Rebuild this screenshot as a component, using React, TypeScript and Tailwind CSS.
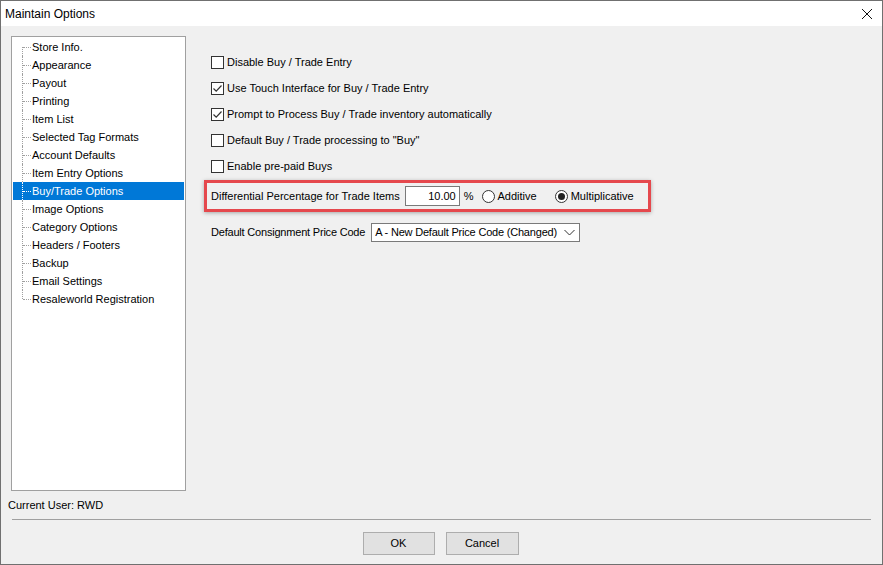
import { useState } from 'react'

const sections = [
  'Store Info.',
  'Appearance',
  'Payout',
  'Printing',
  'Item List',
  'Selected Tag Formats',
  'Account Defaults',
  'Item Entry Options',
  'Buy/Trade Options',
  'Image Options',
  'Category Options',
  'Headers / Footers',
  'Backup',
  'Email Settings',
  'Resaleworld Registration',
]

const checkOptions = [
  { label: 'Disable Buy / Trade Entry', checked: false },
  { label: 'Use Touch Interface for Buy / Trade Entry', checked: true },
  { label: 'Prompt to Process Buy / Trade inventory automatically', checked: true },
  { label: 'Default Buy / Trade processing to "Buy"', checked: false },
  { label: 'Enable pre-paid Buys', checked: false },
]

function CheckBox({ checked }: { checked: boolean }) {
  return (
    <span className="w-[13px] h-[13px] border border-[#333] bg-white flex items-center justify-center shrink-0">
      {checked && (
        <svg width="11" height="11" viewBox="0 0 11 11">
          <path d="M1.5 5.5 L4.2 8.2 L9.5 2.5" fill="none" stroke="#333" strokeWidth="1.2" />
        </svg>
      )}
    </span>
  )
}

function Radio({ checked }: { checked: boolean }) {
  return (
    <span className="w-[13px] h-[13px] rounded-full border border-[#333] bg-white flex items-center justify-center shrink-0">
      {checked && <span className="w-[7px] h-[7px] rounded-full bg-[#222]" />}
    </span>
  )
}

function TreeRow({ label, index, count, selected }: { label: string; index: number; count: number; selected: boolean }) {
  const first = index === 0
  const last = index === count - 1
  return (
    <div className={`relative h-[18px] flex items-center pl-[19px] ${selected ? 'bg-[#0078d7] text-white' : 'text-black'}`}>
      {/* tree connector lines */}
      <span
        className={`absolute left-[9px] w-0 border-l border-dotted ${selected ? 'border-white' : 'border-[#a0a0a0]'} ${first ? 'top-[9px] bottom-0' : last ? 'top-0 h-[9px]' : 'top-0 bottom-0'}`}
      />
      <span className={`absolute left-[10px] top-[9px] w-[8px] h-0 border-t border-dotted ${selected ? 'border-white' : 'border-[#a0a0a0]'}`} />
      <span className="leading-none">{label}</span>
    </div>
  )
}

export default function App() {
  const [selected] = useState('Buy/Trade Options')

  return (
    <div
      className="w-[883px] h-[565px] bg-[#f0f0f0] border border-[#707070] flex flex-col text-[11px] text-black overflow-hidden"
      style={{ fontFamily: '"Liberation Sans", Arial, sans-serif' }}
    >
      {/* title bar */}
      <div className="h-[25px] bg-white flex items-center justify-between pl-[4px] pr-[9px] shrink-0">
        <span className="text-[12px]">Maintain Options</span>
        <svg width="12" height="12" viewBox="0 0 12 12">
          <path d="M1 1 L11 11 M11 1 L1 11" stroke="#111" strokeWidth="1" />
        </svg>
      </div>

      <div className="flex-1 flex flex-col">
        <div className="flex pt-[10px] pl-[10px]">
          {/* section tree */}
          <div className="w-[175px] h-[455px] bg-white border border-[#a0a0a0] pt-[1px] px-px shrink-0">
            {sections.map((s, i) => (
              <TreeRow key={s} label={s} index={i} count={sections.length} selected={s === selected} />
            ))}
          </div>

          {/* buy/trade settings */}
          <div className="pl-[25px] pt-[13px] flex flex-col">
            {checkOptions.map((o) => (
              <div key={o.label} className="h-[26px] flex items-center gap-[3px]">
                <CheckBox checked={o.checked} />
                <span>{o.label}</span>
              </div>
            ))}

            <div className="-ml-[7px] mt-[1px] w-[447px] h-[32px] border-[3px] border-[#e5484d] shadow-[0_1px_4px_rgba(0,0,0,0.3)] pl-[4px] flex items-center">
              <span>Differential Percentage for Trade Items</span>
              <div className="ml-[5px] w-[55px] h-[20px] bg-white border border-[#7a7a7a] flex items-center justify-end pr-[3px]">
                10.00
              </div>
              <span className="ml-[4px]">%</span>
              <div className="ml-[8px] flex items-center gap-[3px]">
                <Radio checked={false} />
                <span>Additive</span>
              </div>
              <div className="ml-[18px] flex items-center gap-[3px]">
                <Radio checked={true} />
                <span>Multiplicative</span>
              </div>
            </div>

            <div className="mt-[11px] flex items-center tracking-[-0.2px]">
              <span>Default Consignment Price Code</span>
              <div className="ml-[6px] w-[209px] h-[19px] bg-white border border-[#7a7a7a] flex items-center justify-between pl-[3px] pr-[4px]">
                <span>A - New Default Price Code (Changed)</span>
                <svg width="11" height="7" viewBox="0 0 11 7">
                  <path d="M0.5 1 L5.5 6 L10.5 1" fill="none" stroke="#333" strokeWidth="1" />
                </svg>
              </div>
            </div>
          </div>
        </div>

        <div className="pl-[7px] mt-[6px]">Current User: RWD</div>

        <div className="mx-[11px] mt-[5px] border-t border-[#a0a0a0]" />

        <div className="flex justify-center gap-[11px] mt-[12px] pr-[2px]">
          <button className="w-[72px] h-[23px] bg-[#e1e1e1] border border-[#adadad]">OK</button>
          <button className="w-[73px] h-[23px] bg-[#e1e1e1] border border-[#adadad]">Cancel</button>
        </div>
      </div>
    </div>
  )
}
